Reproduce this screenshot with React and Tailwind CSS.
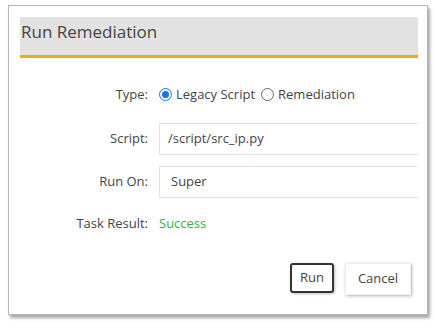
export default function App() {
  return (
    <div className="w-[438px] h-[329px] bg-white pt-[5px] pl-[8px]" style={{ fontFamily: '"Open Sans", sans-serif' }}>
      <div className="w-[420px] h-[310px] bg-white border border-[#b5b5b5] shadow-[2px_3px_3px_rgba(0,0,0,0.35)] pt-[11px] pl-[11px] pr-[9px] text-[13px] text-[#444]">
        <div className="h-[41px] bg-[#e2e2e2] border-b-[3px] border-[#f5a623] pl-[1px] pt-[2px] text-[17px] text-[#444]">
          Run Remediation
        </div>

        <div className="mt-[27px] grid grid-cols-[128px_1fr] gap-x-[11px] items-center">
          <div className="text-right">Type:</div>
          <div className="flex items-center gap-[4px]">
            <span className="w-[13px] h-[13px] rounded-full border border-[#1a73e8] flex items-center justify-center">
              <span className="w-[7px] h-[7px] rounded-full bg-[#1a73e8]" />
            </span>
            <span>Legacy Script</span>
            <span className="w-[13px] h-[13px] rounded-full border border-[#666] ml-[2px]" />
            <span>Remediation</span>
          </div>

          <div className="text-right mt-[18px]">Script:</div>
          <div className="mt-[18px] h-[32px] border border-r-0 border-[#e3e3e3] flex items-center pl-[8px]">
            /script/src_ip.py
          </div>

          <div className="text-right mt-[11px]">Run On:</div>
          <div className="mt-[11px] h-[32px] border border-r-0 border-[#e3e3e3] flex items-center pl-[11px]">
            Super
          </div>

          <div className="text-right mt-[16px]">Task Result:</div>
          <div className="mt-[16px] text-[#2db52d]">Success</div>
        </div>

        <div className="mt-[30px] flex justify-end gap-[11px] pr-[7px]">
          <button className="w-[44px] h-[30px] border-2 border-[#333] rounded-[3px] bg-white shadow-[1px_1px_3px_rgba(0,0,0,0.25)]">
            Run
          </button>
          <button className="w-[66px] h-[32px] bg-white shadow-[1px_1px_3px_rgba(0,0,0,0.3)] border border-[#eee]">
            Cancel
          </button>
        </div>
      </div>
    </div>
  )
}
